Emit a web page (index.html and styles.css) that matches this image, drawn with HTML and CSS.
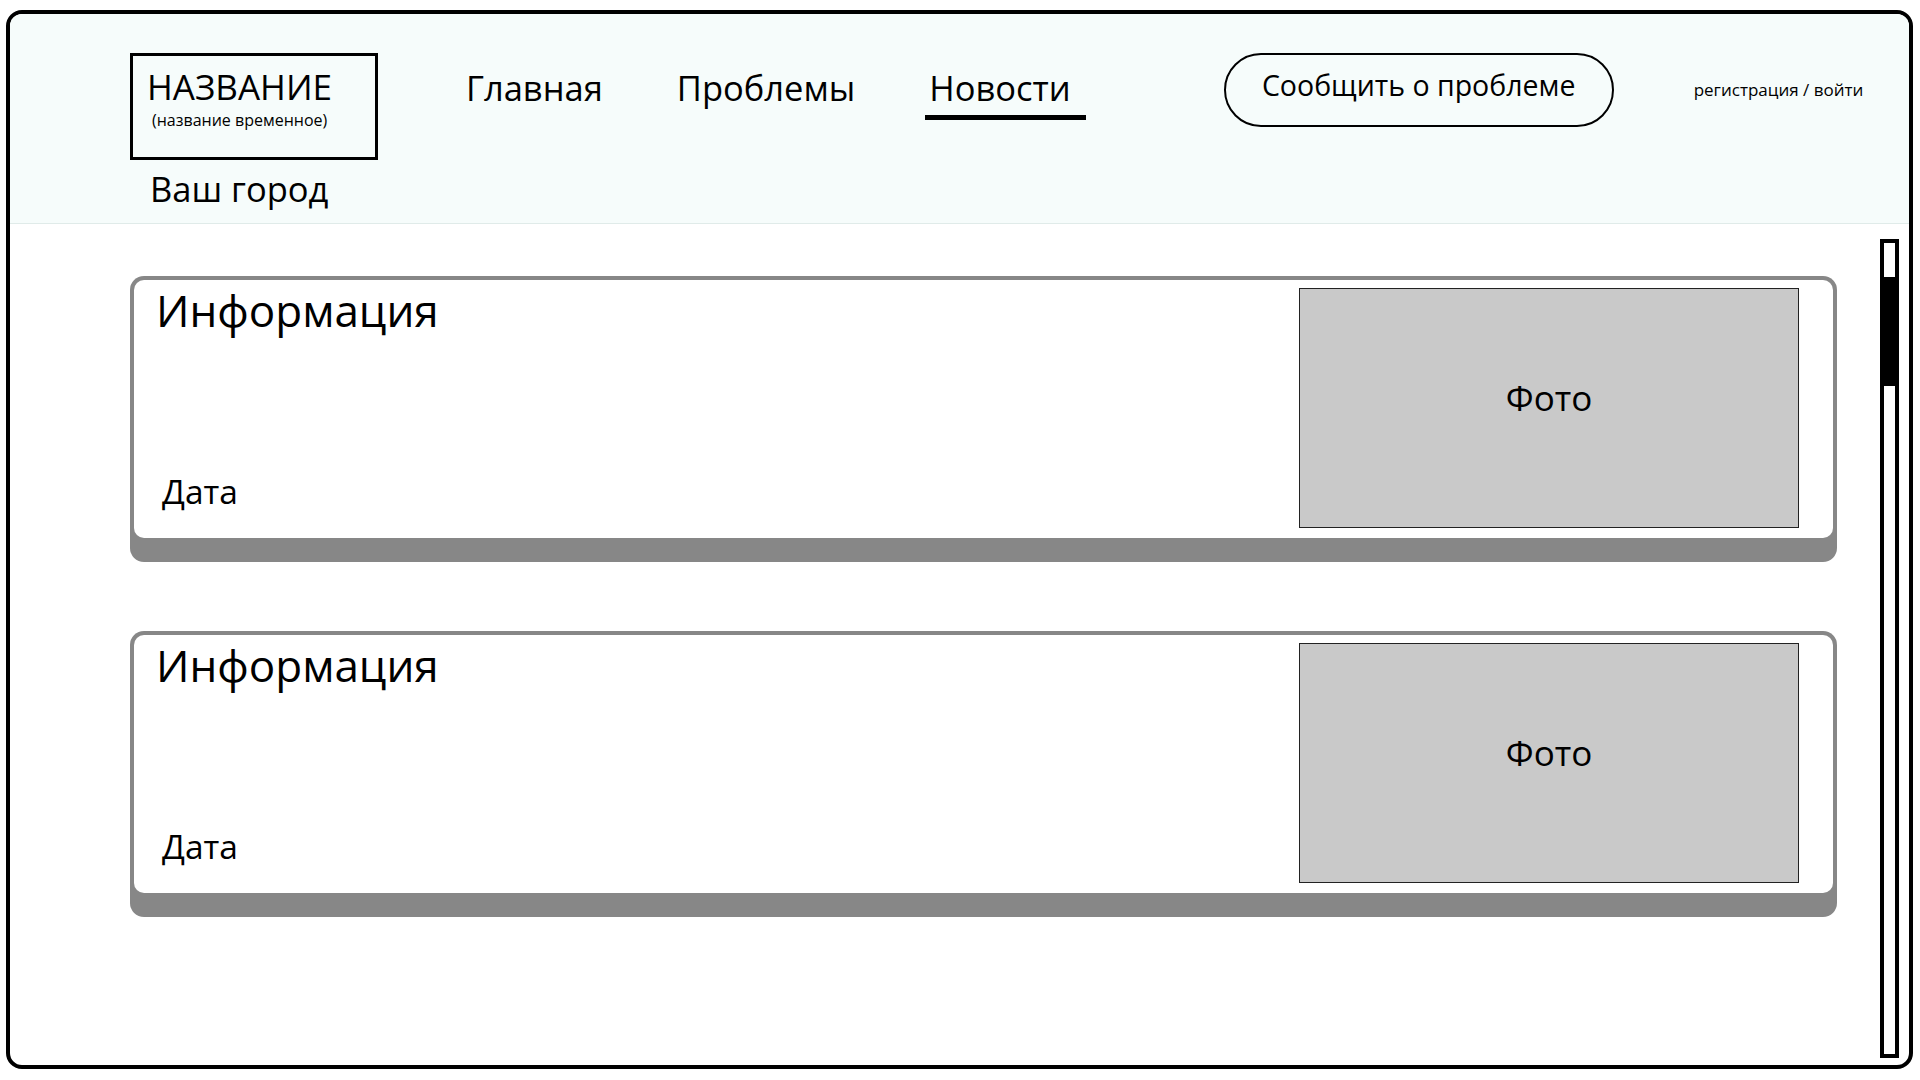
FILE: index.html
```html
<!DOCTYPE html>
<html lang="ru">
<head>
<meta charset="utf-8">
<title>Новости</title>
<link rel="stylesheet" href="styles.css">
</head>
<body>
<div class="frame">
  <header class="header">
    <div class="brand">
      <div class="logo">
        <div class="logo-title">НАЗВАНИЕ</div>
        <div class="logo-sub">(название временное)</div>
      </div>
      <div class="city">Ваш город</div>
    </div>
    <nav class="nav">
      <a class="nav-link">Главная</a>
      <a class="nav-link">Проблемы</a>
      <a class="nav-link active">Новости</a>
    </nav>
    <button class="report-btn">Сообщить о проблеме</button>
    <div class="auth">регистрация / войти</div>
  </header>
  <main class="main">
    <div class="feed">
      <article class="card">
        <div class="card-body">
          <div class="card-info">
            <div class="card-title">Информация</div>
            <div class="card-date">Дата</div>
          </div>
          <div class="card-photo"><span>Фото</span></div>
        </div>
      </article>
      <article class="card">
        <div class="card-body">
          <div class="card-info">
            <div class="card-title">Информация</div>
            <div class="card-date">Дата</div>
          </div>
          <div class="card-photo"><span>Фото</span></div>
        </div>
      </article>
    </div>
    <div class="scrollbar"><div class="scroll-thumb"></div></div>
  </main>
</div>
</body>
</html>
```
FILE: styles.css
```css
* { box-sizing: border-box; }
html, body { margin: 0; padding: 0; background: #fff; }
body {
  width: 1920px;
  height: 1080px;
  overflow: hidden;
  font-family: "Open Sans", "Noto Sans", sans-serif;
  color: #000;
}
.frame {
  margin: 10px 7px 0 6px;
  height: 1059px;
  border: 4px solid #000;
  border-radius: 16px;
  overflow: hidden;
  display: flex;
  flex-direction: column;
  background: #fff;
}
.header {
  height: 210px;
  flex: none;
  background: #f6fcfb;
  border-bottom: 1px solid #e0ebe9;
  display: flex;
  align-items: flex-start;
  padding: 39px 0 0 120px;
}
.brand { width: 248px; flex: none; }
.logo {
  width: 248px;
  height: 107px;
  border: 3px solid #000;
  padding: 13px 0 0 14px;
}
.logo-title { font-size: 35px; line-height: 1; white-space: nowrap; }
.logo-sub { font-size: 16px; line-height: 1; margin: 8px 0 0 5px; white-space: nowrap; }
.city { font-size: 34.5px; line-height: 1; margin: 12px 0 0 20px; white-space: nowrap; }

.nav {
  display: flex;
  flex: none;
  gap: 74px;
  margin: 18px 0 0 88px;
}
.nav-link {
  font-size: 34.5px;
  line-height: 1;
  color: #000;
  text-decoration: none;
  white-space: nowrap;
}
.nav-link.active {
  margin-left: -4px;
  padding: 0 15px 9px 4px;
  border-bottom: 5px solid #000;
}
.report-btn {
  flex: none;
  margin-left: 138px;
  width: 390px;
  height: 74px;
  border: 2px solid #000;
  border-radius: 37px;
  background: transparent;
  font-family: inherit;
  font-size: 28.5px;
  line-height: 1;
  color: #000;
  padding: 0 0 10px;
  display: flex;
  align-items: center;
  justify-content: center;
  white-space: nowrap;
}
.auth {
  flex: none;
  margin: 28px 0 0 80px;
  font-size: 17px;
  line-height: 1;
  white-space: nowrap;
}

.main {
  flex: 1;
  display: flex;
  padding: 15px 10px 7px 120px;
}
.feed {
  flex: 1;
  display: flex;
  flex-direction: column;
  gap: 69px;
  padding-top: 37px;
  margin-right: 43px;
}
.card {
  background: #878787;
  border-radius: 14px;
  padding: 4px 4px 24px 4px;
}
.card-body {
  background: #fff;
  border-radius: 10px;
  height: 258px;
  display: flex;
  padding: 8px 34px 10px 0;
}
.card-info {
  flex: 1;
  display: flex;
  flex-direction: column;
  padding: 0 0 0 22px;
}
.card-title { font-size: 44px; line-height: 1; }
.card-date { font-size: 33.5px; line-height: 1; margin: auto 0 20px 6px; }
.card-photo {
  width: 500px;
  height: 240px;
  background: #c9c9c9;
  border: 1px solid #222;
  display: flex;
  align-items: center;
  justify-content: center;
  padding-bottom: 22px;
  font-size: 35px;
  line-height: 1;
}
.scrollbar {
  width: 19px;
  border: 4px solid #000;
  padding-top: 34px;
}
.scroll-thumb { height: 109px; background: #000; }
```
